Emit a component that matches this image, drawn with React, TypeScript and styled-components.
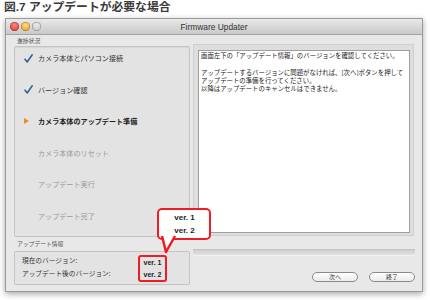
import * as React from "react";
import styled, { createGlobalStyle } from "styled-components";

const GlobalStyle = createGlobalStyle`
  body {
    margin: 0;
    background: #ffffff;
    font-family: "Liberation Sans", "Noto Sans CJK JP", sans-serif;
  }
`;

const jp = `"Noto Sans CJK JP", "Liberation Sans", sans-serif`;

const Page = styled.div`
  width: 430px;
  height: 300px;
  overflow: hidden;
`;

const Caption = styled.div`
  height: 18px;
  padding-left: 4px;
  font-family: "Liberation Sans", "Noto Sans CJK JP", sans-serif;
  font-weight: bold;
  font-size: 11.8px;
  line-height: 15px;
  color: #3a3a3a;
`;

const Window = styled.div`
  position: relative;
  margin-left: 5px;
  width: 418px;
  height: 274px;
  box-sizing: border-box;
  border: 1px solid #9a9a9a;
  background: #e8e8e8;
  box-shadow: 0 2px 6px rgba(0, 0, 0, 0.35);
  display: flex;
  flex-direction: column;
`;

const TitleBar = styled.div`
  position: relative;
  height: 15px;
  flex: none;
  display: flex;
  align-items: center;
  justify-content: center;
  background: linear-gradient(#e9e9e9, #c9c9c9);
  border-bottom: 1px solid #a4a4a4;
  font-size: 8.4px;
  color: #333;
`;

const Lights = styled.div`
  position: absolute;
  left: 4px;
  top: 3px;
  display: flex;
  gap: 2px;
`;

const Light = styled.span<{ $c: string; $d: string }>`
  width: 9px;
  height: 9px;
  border-radius: 50%;
  background: radial-gradient(circle at 50% 35%, ${p => p.$c} 0%, ${p => p.$d} 90%);
  box-shadow: inset 0 0 0 0.5px rgba(0, 0, 0, 0.35);
`;

const Body = styled.div`
  flex: 1;
  display: grid;
  grid-template-columns: 176px 221px;
  column-gap: 3px;
  padding: 0 8px;
`;

const Column = styled.div`
  display: flex;
  flex-direction: column;
`;

const GroupLabel = styled.div<{ $h: number }>`
  height: ${p => p.$h}px;
  line-height: ${p => p.$h}px;
  padding-left: 3px;
  font-family: ${jp};
  font-size: 5.8px;
  color: #555;
`;

const StepsPanel = styled.div`
  height: 191px;
  box-sizing: border-box;
  border: 1px solid #c4c4c4;
  border-radius: 2px;
  background: #e3e3e3;
  box-shadow: inset 0 1px 1px rgba(0, 0, 0, 0.06);
  display: flex;
  flex-direction: column;
  gap: 17.5px;
  padding-top: 4px;
`;

const Step = styled.div<{ $state: "done" | "current" | "todo" }>`
  height: 14px;
  display: flex;
  align-items: center;
  font-family: ${jp};
  font-size: 7.1px;
  font-weight: ${p => (p.$state === "current" ? "bold" : "normal")};
  color: ${p => (p.$state === "todo" ? "#9a9a9a" : p.$state === "current" ? "#222" : "#333")};
`;

const Mark = styled.span`
  width: 23px;
  padding-left: 9px;
  box-sizing: border-box;
  display: flex;
  align-items: center;
`;

const InfoPanel = styled.div`
  height: 34px;
  box-sizing: border-box;
  border: 1px solid #c4c4c4;
  border-radius: 2px;
  background: #e3e3e3;
  display: flex;
  padding: 2px 0 0 7px;
`;

const InfoLabels = styled.div`
  width: 116px;
  display: flex;
  flex-direction: column;
  font-family: ${jp};
  font-size: 6.7px;
  line-height: 13px;
  color: #333;
`;

const InfoValues = styled.div`
  width: 29px;
  height: 27px;
  margin-top: 1px;
  box-sizing: border-box;
  border: 2.5px solid #ee1c24;
  border-radius: 3px;
  display: flex;
  flex-direction: column;
  align-items: center;
  justify-content: space-around;
  font-size: 7px;
  font-weight: bold;
  color: #222;
`;

const TextFrame = styled.div`
  margin-top: 9px;
  height: 192px;
  box-sizing: border-box;
  border: 1px solid #cfcfcf;
  background: #dedede;
  padding: 5px 3px 2px 4px;
`;

const TextBox = styled.div`
  height: 100%;
  box-sizing: border-box;
  border: 1px solid #9e9e9e;
  background: #ffffff;
  padding: 1px 2px;
  font-family: ${jp};
  font-size: 6.4px;
  line-height: 8.3px;
  color: #222;
  white-space: nowrap;
`;

const Progress = styled.div`
  margin-top: 13px;
  width: 222px;
  height: 7px;
  box-sizing: border-box;
  border-top: 1px solid #c2c2c2;
  border-bottom: 1px solid #f2f2f2;
  background: linear-gradient(#cfcfcf, #e2e2e2);
`;

const Buttons = styled.div`
  margin-top: 16px;
  width: 222px;
  display: flex;
  justify-content: flex-end;
  gap: 11px;
`;

const Button = styled.button`
  width: 46px;
  height: 10px;
  padding: 0;
  border: 1px solid #8a8a8a;
  border-radius: 6px;
  background: linear-gradient(#ffffff, #ececec);
  font-family: ${jp};
  font-size: 6px;
  line-height: 8px;
  color: #333;
`;

const Callout = styled.div`
  position: absolute;
  left: 151px;
  top: 189px;
  width: 54px;
  height: 32px;
  box-sizing: border-box;
  border: 2.5px solid #ee1c24;
  border-radius: 5px;
  background: #ffffff;
  display: flex;
  flex-direction: column;
  align-items: center;
  justify-content: space-around;
  padding: 1px 0 1px 1px;
  font-size: 8px;
  font-weight: bold;
  color: #222;
  z-index: 2;
`;

const Tail = styled.svg`
  position: absolute;
  left: 1px;
  top: 26px;
  overflow: visible;
`;

const Check = () => (
  <svg width="9" height="9" viewBox="0 0 9 9">
    <path d="M1 5.2 L3.2 8 L8.2 0.8" fill="none" stroke="#2b5f9e" strokeWidth="1.5" strokeLinecap="round" strokeLinejoin="round" />
  </svg>
);

const Arrow = () => (
  <svg width="5" height="6" viewBox="0 0 5 6">
    <path d="M0 0 L5 3 L0 6 Z" fill="#f08c1c" />
  </svg>
);

const steps: { label: string; state: "done" | "current" | "todo" }[] = [
  { label: "カメラ本体とパソコン接続", state: "done" },
  { label: "バージョン確認", state: "done" },
  { label: "カメラ本体のアップデート準備", state: "current" },
  { label: "カメラ本体のリセット", state: "todo" },
  { label: "アップデート実行", state: "todo" },
  { label: "アップデート完了", state: "todo" },
];

export default function App() {
  return (
    <Page>
      <GlobalStyle />
      <Caption>図.7 アップデートが必要な場合</Caption>
      <Window>
        <TitleBar>
          <Lights>
            <Light $c="#ff8a80" $d="#d6312b" />
            <Light $c="#ffe08a" $d="#e8951c" />
            <Light $c="#eeeeee" $d="#bcbcbc" />
          </Lights>
          Firmware Updater
        </TitleBar>
        <Body>
          <Column>
            <GroupLabel $h={11}>進捗状況</GroupLabel>
            <StepsPanel>
              {steps.map(s => (
                <Step key={s.label} $state={s.state}>
                  <Mark>{s.state === "done" ? <Check /> : s.state === "current" ? <Arrow /> : null}</Mark>
                  {s.label}
                </Step>
              ))}
            </StepsPanel>
            <GroupLabel $h={14}>アップデート情報</GroupLabel>
            <InfoPanel>
              <InfoLabels>
                <span>現在のバージョン:</span>
                <span>アップデート後のバージョン:</span>
              </InfoLabels>
              <InfoValues>
                <span>ver. 1</span>
                <span>ver. 2</span>
              </InfoValues>
            </InfoPanel>
          </Column>
          <Column>
            <TextFrame>
              <TextBox>
                画面左下の「アップデート情報」のバージョンを確認してください。
                <br />
                <br />
                アップデートするバージョンに問題がなければ、[次へ]ボタンを押して
                <br />
                アップデートの準備を行ってください。
                <br />
                以降はアップデートのキャンセルはできません。
              </TextBox>
            </TextFrame>
            <Progress />
            <Buttons>
              <Button>次へ</Button>
              <Button>終了</Button>
            </Buttons>
          </Column>
        </Body>
        <Callout>
          <span>ver. 1</span>
          <span>ver. 2</span>
          <Tail width="16" height="18" viewBox="0 0 16 18">
            <polygon points="2,0 15,0 6,16" fill="#ffffff" />
            <polyline points="2,0 6,16 15,0" fill="none" stroke="#ee1c24" strokeWidth="2.5" strokeLinejoin="round" />
          </Tail>
        </Callout>
      </Window>
    </Page>
  );
}
